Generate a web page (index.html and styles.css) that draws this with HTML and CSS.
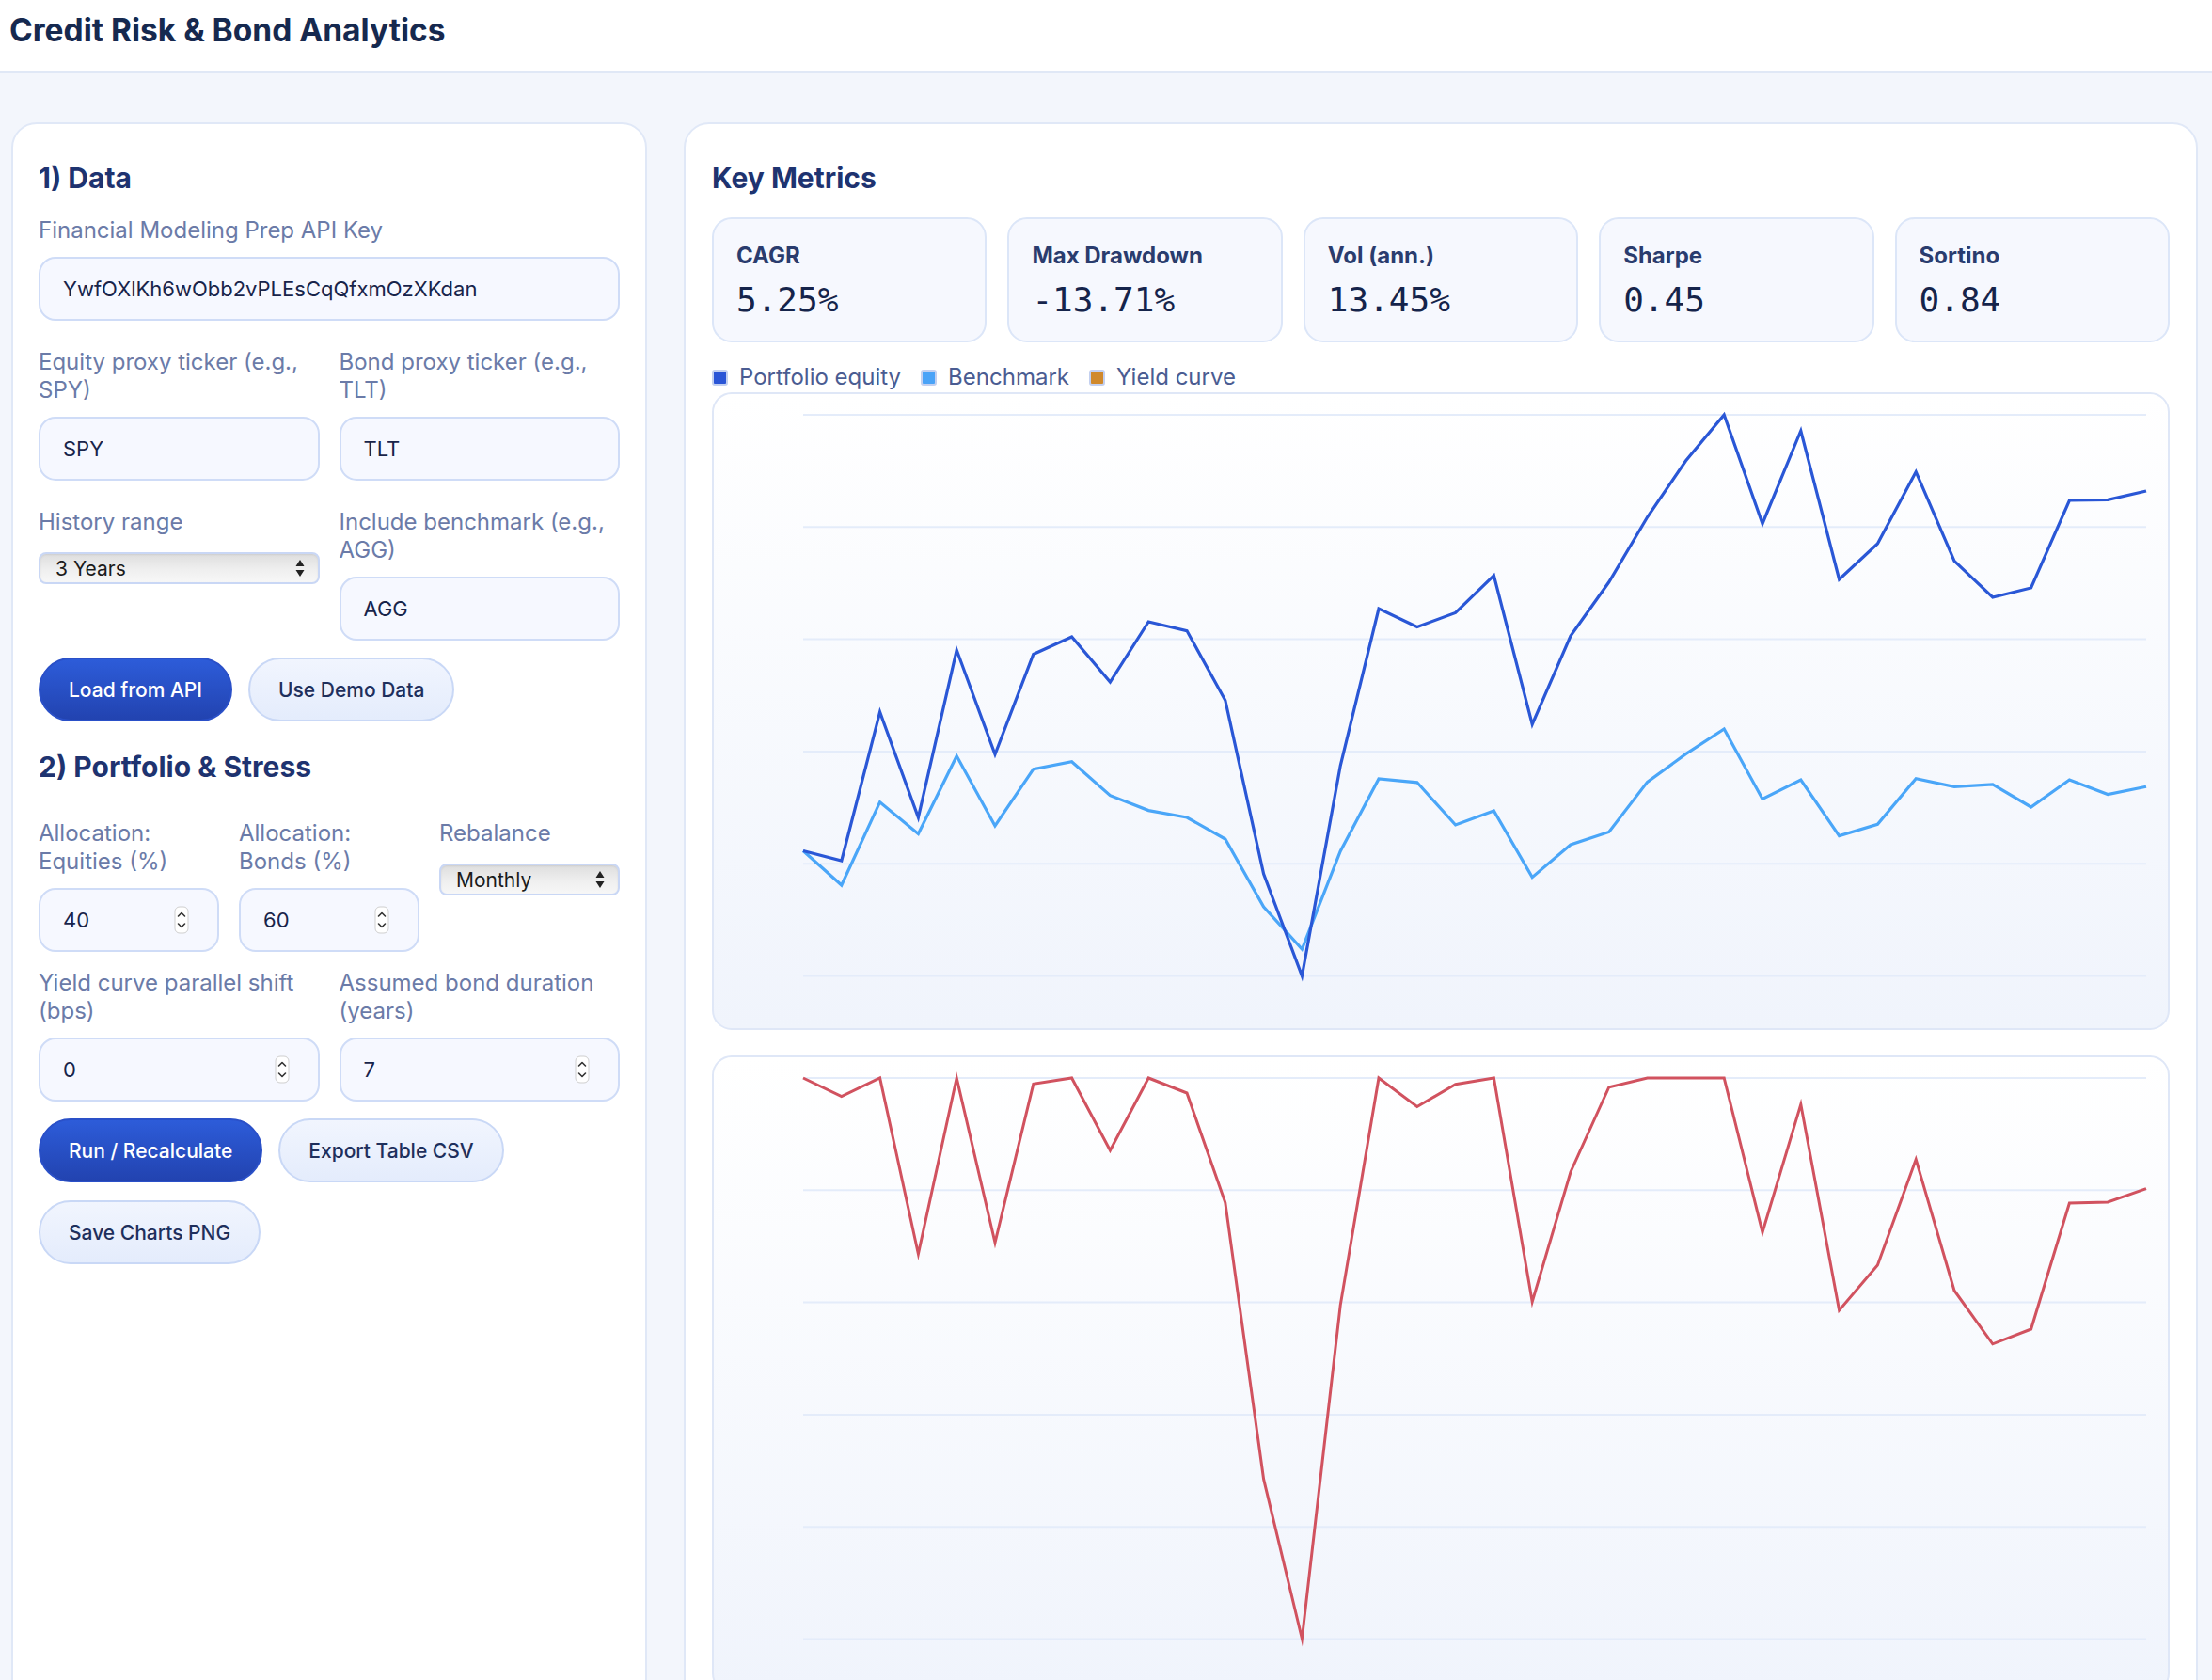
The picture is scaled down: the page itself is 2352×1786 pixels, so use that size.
FILE: index.html
```html
<!DOCTYPE html>
<html lang="en">
<head>
<meta charset="utf-8">
<title>Credit Risk &amp; Bond Analytics</title>
<link rel="stylesheet" href="styles.css">
</head>
<body>
<header class="topbar">
  <h1 class="app-title">Credit Risk &amp; Bond Analytics</h1>
</header>
<main class="layout">
  <section class="card panel-left">
    <h2 class="section-title">1) Data</h2>
    <div class="field api-field">
      <span class="label">Financial Modeling Prep API Key</span>
      <div class="input">YwfOXlKh6wObb2vPLEsCqQfxmOzXKdan</div>
    </div>
    <div class="grid2 data-grid">
      <div class="field">
        <span class="label">Equity proxy ticker (e.g., SPY)</span>
        <div class="input">SPY</div>
      </div>
      <div class="field">
        <span class="label">Bond proxy ticker (e.g., TLT)</span>
        <div class="input">TLT</div>
      </div>
      <div class="field">
        <span class="label">History range</span>
        <div class="select"><span>3 Years</span>
          <svg class="select-arrows" width="10" height="20" viewBox="0 0 10 20"><path d="M5 1 L9.5 8 H0.5 Z M5 19 L0.5 12 H9.5 Z" fill="#222"/></svg>
        </div>
      </div>
      <div class="field">
        <span class="label">Include benchmark (e.g., AGG)</span>
        <div class="input">AGG</div>
      </div>
    </div>
    <div class="btn-row">
      <button class="btn btn-primary">Load from API</button>
      <button class="btn btn-secondary">Use Demo Data</button>
    </div>

    <h2 class="section-title second">2) Portfolio &amp; Stress</h2>
    <div class="grid3">
      <div class="field">
        <span class="label">Allocation: Equities (%)</span>
        <div class="input number"><span>40</span>
          <svg class="spin" width="16" height="30" viewBox="0 0 16 30"><rect x="1" y="1" width="14" height="28" rx="5" fill="#fff" stroke="#cfcfcf"/><path d="M4.5 11 L8 7.5 L11.5 11 M4.5 19 L8 22.5 L11.5 19" fill="none" stroke="#333" stroke-width="1.6" stroke-linecap="round" stroke-linejoin="round"/></svg>
        </div>
      </div>
      <div class="field">
        <span class="label">Allocation: Bonds (%)</span>
        <div class="input number"><span>60</span>
          <svg class="spin" width="16" height="30" viewBox="0 0 16 30"><rect x="1" y="1" width="14" height="28" rx="5" fill="#fff" stroke="#cfcfcf"/><path d="M4.5 11 L8 7.5 L11.5 11 M4.5 19 L8 22.5 L11.5 19" fill="none" stroke="#333" stroke-width="1.6" stroke-linecap="round" stroke-linejoin="round"/></svg>
        </div>
      </div>
      <div class="field">
        <span class="label">Rebalance</span>
        <div class="select"><span>Monthly</span>
          <svg class="select-arrows" width="10" height="20" viewBox="0 0 10 20"><path d="M5 1 L9.5 8 H0.5 Z M5 19 L0.5 12 H9.5 Z" fill="#222"/></svg>
        </div>
      </div>
    </div>
    <div class="grid2 stress-grid">
      <div class="field">
        <span class="label">Yield curve parallel shift (bps)</span>
        <div class="input number"><span>0</span>
          <svg class="spin" width="16" height="30" viewBox="0 0 16 30"><rect x="1" y="1" width="14" height="28" rx="5" fill="#fff" stroke="#cfcfcf"/><path d="M4.5 11 L8 7.5 L11.5 11 M4.5 19 L8 22.5 L11.5 19" fill="none" stroke="#333" stroke-width="1.6" stroke-linecap="round" stroke-linejoin="round"/></svg>
        </div>
      </div>
      <div class="field">
        <span class="label">Assumed bond duration (years)</span>
        <div class="input number"><span>7</span>
          <svg class="spin" width="16" height="30" viewBox="0 0 16 30"><rect x="1" y="1" width="14" height="28" rx="5" fill="#fff" stroke="#cfcfcf"/><path d="M4.5 11 L8 7.5 L11.5 11 M4.5 19 L8 22.5 L11.5 19" fill="none" stroke="#333" stroke-width="1.6" stroke-linecap="round" stroke-linejoin="round"/></svg>
        </div>
      </div>
    </div>
    <div class="btn-row">
      <button class="btn btn-primary">Run / Recalculate</button>
      <button class="btn btn-secondary">Export Table CSV</button>
      <button class="btn btn-secondary">Save Charts PNG</button>
    </div>
  </section>

  <section class="card panel-right">
    <h2 class="section-title">Key Metrics</h2>
    <div class="metrics">
      <div class="metric"><div class="metric-label">CAGR</div><div class="metric-value">5.25%</div></div>
      <div class="metric"><div class="metric-label">Max Drawdown</div><div class="metric-value">-13.71%</div></div>
      <div class="metric"><div class="metric-label">Vol (ann.)</div><div class="metric-value">13.45%</div></div>
      <div class="metric"><div class="metric-label">Sharpe</div><div class="metric-value">0.45</div></div>
      <div class="metric"><div class="metric-label">Sortino</div><div class="metric-value">0.84</div></div>
    </div>
    <div class="legend">
      <span class="legend-item"><i class="swatch sw-equity"></i>Portfolio equity</span>
      <span class="legend-item"><i class="swatch sw-bench"></i>Benchmark</span>
      <span class="legend-item"><i class="swatch sw-yield"></i>Yield curve</span>
    </div>
    <div class="chart">
      <svg class="chart-svg" width="1546" height="674" viewBox="0 0 1546 674">
        <g transform="translate(-2,-2)">
          <g class="grid-lines">
            <line x1="97" x2="1525" y1="24" y2="24"/>
            <line x1="97" x2="1525" y1="143.3" y2="143.3"/>
            <line x1="97" x2="1525" y1="262.6" y2="262.6"/>
            <line x1="97" x2="1525" y1="381.9" y2="381.9"/>
            <line x1="97" x2="1525" y1="501.2" y2="501.2"/>
            <line x1="97" x2="1525" y1="620.5" y2="620.5"/>
          </g>
          <polyline class="line-bench" points="97,487.5 137.8,524 178.6,435.7 219.4,469.5 260.2,386.7 301,461 341.8,400.6 382.6,392.8 423.4,428.7 464.2,444.6 505,452 545.8,475 586.6,547 627.4,592 668.2,488 709,411 749.8,414.8 790.6,460 831.4,445 872.2,515.6 913,481 953.8,467.5 994.6,414.4 1035.4,384.6 1076.2,358 1117,432.4 1157.8,412 1198.6,471.6 1239.4,459.3 1280.2,410.8 1321,419.3 1361.8,416.9 1402.6,441 1443.4,412 1484.2,427.5 1525,419.3"/>
          <polyline class="line-equity" points="97,487.5 137.8,498 178.6,340 219.4,452 260.2,274 301,385 341.8,278.5 382.6,260 423.4,308 464.2,244 505,253.6 545.8,327.5 586.6,512 627.4,620.5 668.2,397 709,230 749.8,249.5 790.6,234.4 831.4,194.8 872.2,353 913,259 953.8,201.8 994.6,132.8 1035.4,73 1076.2,24 1117,139.7 1157.8,41 1198.6,199 1239.4,161 1280.2,84.6 1321,179.3 1361.8,218 1402.6,208 1443.4,115 1484.2,114.4 1525,105"/>
        </g>
      </svg>
    </div>
    <div class="chart chart-second">
      <svg class="chart-svg" width="1546" height="674" viewBox="0 0 1546 674">
        <g transform="translate(-2,-2)">
          <g class="grid-lines">
            <line x1="97" x2="1525" y1="24" y2="24"/>
            <line x1="97" x2="1525" y1="143.3" y2="143.3"/>
            <line x1="97" x2="1525" y1="262.6" y2="262.6"/>
            <line x1="97" x2="1525" y1="381.9" y2="381.9"/>
            <line x1="97" x2="1525" y1="501.2" y2="501.2"/>
            <line x1="97" x2="1525" y1="620.5" y2="620.5"/>
          </g>
          <polyline class="line-dd" points="97,24 137.8,43.5 178.6,24 219.4,211 260.2,24 301,199 341.8,30.3 382.6,24 423.4,101 464.2,24 505,40 545.8,156.5 586.6,450.4 627.4,620 668.2,265.6 709,24 749.8,54.5 790.6,30.7 831.4,24 872.2,262 913,124 953.8,33.7 994.6,24 1035.4,24 1076.2,24 1117,188 1157.8,52 1198.6,271 1239.4,223 1280.2,110.6 1321,250 1361.8,306.8 1402.6,291 1443.4,157 1484.2,156 1525,141.6"/>
        </g>
      </svg>
    </div>
  </section>
</main>
</body>
</html>
```

FILE: styles.css
```css
* { box-sizing: border-box; }

html, body { margin: 0; padding: 0; }

body {
  font-family: Inter, "Noto Sans", "Liberation Sans", sans-serif;
  background: #f3f6fc;
  color: #1a2544;
  min-width: 2352px;
}

.topbar {
  height: 78px;
  background: #ffffff;
  border-bottom: 2px solid #e0e8f6;
  padding: 12px 10px 0;
}

.app-title {
  margin: 0;
  font-size: 33.5px;
  line-height: 40px;
  font-weight: 700;
  color: #16294f;
}

.layout {
  display: grid;
  grid-template-columns: 676px 1610px;
  column-gap: 39px;
  padding: 52px 0 0 12px;
  align-items: start;
}

.card {
  background: #ffffff;
  border: 2px solid #e0e8f7;
  border-radius: 27px;
  padding: 39px 27px 40px;
}

.panel-left { min-height: 1700px; }
.panel-right { padding: 39px 28px 40px; }

.section-title {
  margin: 0;
  font-size: 30px;
  line-height: 36px;
  font-weight: 700;
  color: #1e3370;
}

.section-title.second { margin-top: 30px; }

.field { display: flex; flex-direction: column; align-items: stretch; }
.api-field { margin-top: 23px; }

.label {
  display: block;
  font-size: 24px;
  line-height: 30px;
  color: #6b7ba8;
  margin-bottom: 13px;
}

.input {
  height: 68px;
  border: 2px solid #cfdcf7;
  border-radius: 18px;
  background: #f6f8ff;
  padding: 0 24px;
  display: flex;
  align-items: center;
  font-size: 22px;
  color: #18244a;
}

.input.number { justify-content: space-between; padding-right: 30px; }
.spin { display: block; }

.select {
  height: 34px;
  margin-top: 4px;
  border: 2px solid #c9d7f5;
  border-radius: 8px;
  background: linear-gradient(180deg, #dedede 0%, #efefef 55%, #f7f7f7 100%);
  box-shadow: inset 0 1px 2px rgba(0,0,0,0.08);
  display: flex;
  align-items: center;
  justify-content: space-between;
  padding: 0 14px 0 16px;
  font-size: 21px;
  color: #1b1b1b;
}

.grid2 {
  display: grid;
  grid-template-columns: 1fr 1fr;
  column-gap: 21px;
  row-gap: 29px;
  align-items: start;
}

.data-grid { margin-top: 29px; }
.stress-grid { margin-top: 18px; }

.grid3 {
  display: grid;
  grid-template-columns: repeat(3, 1fr);
  column-gap: 21px;
  margin-top: 38px;
  align-items: start;
}

.btn-row {
  display: flex;
  flex-wrap: wrap;
  gap: 19px 17px;
  margin-top: 18px;
}

.btn {
  height: 68px;
  padding: 0 30px;
  border-radius: 34px;
  font-family: inherit;
  font-size: 21px;
  font-weight: 500;
  display: inline-flex;
  align-items: center;
  cursor: pointer;
}

.btn-primary {
  background: linear-gradient(180deg, #2d5cd9 0%, #2243b0 100%);
  border: 2px solid #2a50c8;
  color: #ffffff;
}

.btn-secondary {
  background: linear-gradient(180deg, #f1f5fe 0%, #e4ecfc 100%);
  border: 2px solid #c9d8f6;
  color: #1e2f5c;
}

.metrics {
  display: grid;
  grid-template-columns: repeat(5, 1fr);
  column-gap: 22px;
  margin-top: 24px;
}

.metric {
  height: 133px;
  background: #f6f8fe;
  border: 2px solid #dce6f8;
  border-radius: 21px;
  padding: 24px 24px 0;
}

.metric-label {
  font-size: 24px;
  line-height: 30px;
  font-weight: 700;
  color: #2a3c6e;
}

.metric-value {
  margin-top: 10px;
  font-family: "DejaVu Sans Mono", "Liberation Mono", monospace;
  font-size: 36px;
  line-height: 44px;
  color: #15244b;
}

.legend {
  display: flex;
  gap: 21px;
  margin-top: 22px;
  height: 30px;
  align-items: center;
}

.legend-item {
  display: inline-flex;
  align-items: center;
  gap: 12px;
  font-size: 24px;
  line-height: 30px;
  color: #4a5c92;
}

.swatch {
  display: inline-block;
  width: 17px;
  height: 17px;
  border-radius: 3px;
  border: 2px solid #c3d0f0;
}

.sw-equity { background: #2a55d6; }
.sw-bench { background: #4aa3f7; }
.sw-yield { background: #d0892c; }

.chart {
  margin-top: 1px;
  height: 678px;
  border: 2px solid #dfe7f7;
  border-radius: 21px;
  background: linear-gradient(180deg, #ffffff 0%, #f0f4fc 100%);
  overflow: hidden;
}

.chart-second { margin-top: 27px; }

.chart-svg { display: block; }

.grid-lines line { stroke: #e4ecfa; stroke-width: 2; }

.line-equity, .line-bench, .line-dd {
  fill: none;
  stroke-linejoin: miter;
  stroke-miterlimit: 10;
}

.line-equity { stroke: #2a57d6; stroke-width: 3.2; }
.line-bench { stroke: #4aa6f8; stroke-width: 3.2; }
.line-dd { stroke: #d1525f; stroke-width: 3; }
```
